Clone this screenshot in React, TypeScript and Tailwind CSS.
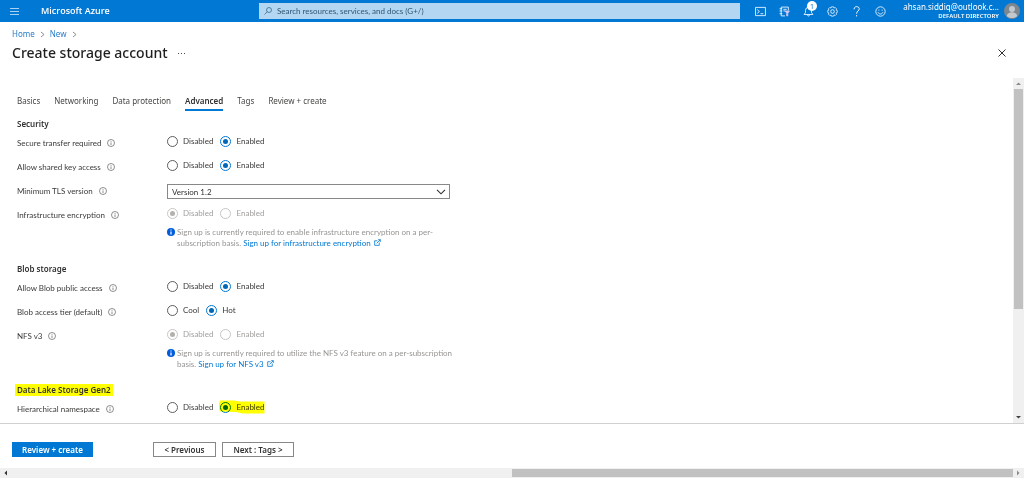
import { useState } from "react";
import type { ReactNode } from "react";

function InfoIcon() {
  return (
    <svg viewBox="0 0 16 16" className="size-2 shrink-0" fill="none" stroke="#605e5c" strokeWidth="1.4" aria-hidden="true">
      <circle cx="8" cy="8" r="7" />
      <path d="M8 7v5M8 4v1.6" />
    </svg>
  );
}

function ExternalIcon() {
  return (
    <svg viewBox="0 0 16 16" className="ml-[3px] inline size-[7px] align-baseline" fill="none" stroke="currentColor" strokeWidth="1.8" aria-hidden="true">
      <path d="M8 4H1.5v10.5H12V8M6 10 14.5 1.5M9.5 1.5h5v5" />
    </svg>
  );
}

function Chevron() {
  return (
    <svg viewBox="0 0 8 10" className="h-[7px] w-[5px]" fill="none" stroke="#797775" strokeWidth="1.3" aria-hidden="true">
      <path d="m1.5 1 5 4-5 4" />
    </svg>
  );
}

function Radio({ name, label, checked, disabled, onSelect }: {
  name: string;
  label: string;
  checked: boolean;
  disabled?: boolean;
  onSelect: () => void;
}) {
  return (
    <label className={`flex h-3 items-center gap-[5px] ${disabled ? "text-[#a19f9d]" : ""}`}>
      <input
        type="radio"
        name={name}
        checked={checked}
        disabled={disabled}
        onChange={onSelect}
        className="grid size-[11px] shrink-0 appearance-none place-content-center rounded-full border border-[#605e5c] checked:border-[#0078d4] checked:before:size-[5px] checked:before:rounded-full checked:before:bg-[#0067b8] disabled:border-[#c8c6c4] disabled:before:bg-[#b3b0ad]"
      />
      {label}
    </label>
  );
}

function RadioPair({ name, options, initial, disabled, highlight }: {
  name: string;
  options: string[];
  initial: string;
  disabled?: boolean;
  highlight?: boolean;
}) {
  const [value, setValue] = useState(initial);
  return (
    <div role="radiogroup" aria-label={name} className="flex gap-[7px]">
      {options.map((o) => (
        <div key={o} className="relative">
          <Radio name={name} label={o} checked={value === o} disabled={disabled} onSelect={() => setValue(o)} />
          {highlight && o === initial && (
            <svg viewBox="0 0 46 14" className="pointer-events-none absolute -left-px -top-px h-[14px] w-[46px] mix-blend-multiply" aria-hidden="true">
              <path d="M1 0.5H15L21 1.5H45.5V13.5H24L17 12 1 11.5 0 9V3Z" fill="#ffff00" />
            </svg>
          )}
        </div>
      ))}
    </div>
  );
}

function Row({ label, htmlFor, children }: { label: string; htmlFor?: string; children: ReactNode }) {
  return (
    <div className="grid min-h-5 grid-cols-[150px_minmax(0,283px)] items-start">
      <div className="flex items-center gap-1.5 pt-0.5">
        {htmlFor ? <label htmlFor={htmlFor}>{label}</label> : <span>{label}</span>}
        <InfoIcon />
      </div>
      <div>{children}</div>
    </div>
  );
}

function Section({ title, children }: { title: ReactNode; children: ReactNode }) {
  return (
    <section>
      <h2 className="mb-[5px] font-semibold text-[#323130]">{title}</h2>
      <div className="flex flex-col gap-1 font-['Lato','Noto_Sans',sans-serif] text-[#3b3a39]">{children}</div>
    </section>
  );
}

function Notice({ text, link }: { text: string; link: string }) {
  return (
    <div className="-mr-3 mt-2 flex gap-0.5 leading-[11px] text-[#979593]">
      <svg viewBox="0 0 16 16" className="mt-px size-2 shrink-0" aria-hidden="true">
        <circle cx="8" cy="8" r="8" fill="#015cda" />
        <path d="M8 6.8V13M8 3v2.2" stroke="#fff" strokeWidth="2.4" />
      </svg>
      <p>
        {text}{" "}
        <a href="#signup" className="whitespace-nowrap text-[#0078d4]">
          {link}
          <ExternalIcon />
        </a>
      </p>
    </div>
  );
}

function HeaderButton({ label, badge, children }: { label: string; badge?: string; children: ReactNode }) {
  return (
    <button type="button" aria-label={label} className="relative flex w-6 items-center justify-center">
      <svg viewBox="0 0 20 20" className="size-[11px]" fill="none" stroke="#fff" strokeWidth="1.5">
        {children}
      </svg>
      {badge && (
        <span className="absolute left-[11px] top-px flex size-[10px] items-center justify-center rounded-full bg-white text-[7px] leading-none text-[#0078d4]">
          {badge}
        </span>
      )}
    </button>
  );
}

function Header() {
  return (
    <header className="flex h-[22px] items-stretch bg-[#0078d4] text-white">
      <div className="flex w-[259px] shrink-0 items-center">
        <button type="button" aria-label="Menu" className="flex w-[29px] justify-center">
          <svg viewBox="0 0 9 7" className="h-[7px] w-[9px]" stroke="#a8d2f3" strokeWidth="1">
            <path d="M0 .5h9M0 3.5h9M0 6.5h9" />
          </svg>
        </button>
        <a href="#home" className="ml-3 font-['Open_Sans','Noto_Sans',sans-serif] text-[9px] font-semibold">Microsoft Azure</a>
      </div>
      <label className="my-[3px] flex min-w-0 flex-1 items-center bg-[#b3d7f2]">
        <svg viewBox="0 0 16 16" className="ml-[5px] size-2 shrink-0" fill="none" stroke="#33658c" strokeWidth="1.5" aria-hidden="true">
          <circle cx="10" cy="6" r="5" />
          <path d="M6.5 9.5 1 15" />
        </svg>
        <input
          type="text"
          aria-label="Search"
          placeholder="Search resources, services, and docs (G+/)"
          className="ml-[5px] min-w-0 flex-1 bg-transparent font-['Lato','Noto_Sans',sans-serif] leading-3 outline-none placeholder:text-[#2f5676]"
        />
      </label>
      <div className="ml-2 flex shrink-0">
        <HeaderButton label="Cloud Shell">
          <path d="M1 2.5h18v15H1zM4 6.5l4 3.5-4 3.5M10 14h5" />
        </HeaderButton>
        <HeaderButton label="Directories and subscriptions">
          <path d="M4 8V2h13v6M4 8v10h7M1 5h5M1 9h5M1 14h5M8 6h6M8 9h3" />
          <path d="M11 9h8l-3 4v5h-2v-5z" fill="#d9c4f2" stroke="#d9c4f2" />
        </HeaderButton>
        <HeaderButton label="Notifications" badge="1">
          <path d="M2 15.5h16l-2.5-3.5V8a5.5 5.5 0 0 0-11 0v4zM8 16c0 3 4 3 4 0" />
        </HeaderButton>
        <HeaderButton label="Settings">
          <path d="m8 1.500h4l.7 2.300 2.300-1.100 2.500 2.500-1.100 2.300 2.300.7v3.600l-2.300.7 1.100 2.300-2.500 2.500-2.300-1.100-.7 2.300H8l-.7-2.300L5 17.300l-2.500-2.500 1.100-2.300-2.300-.7V8.200l2.300-.7-1.100-2.300L5 2.700l2.300 1.100z" strokeWidth="1.3" />
          <circle cx="10" cy="10" r="3.3" />
        </HeaderButton>
        <HeaderButton label="Help">
          <path d="M5.500 6c0-6.500 9.500-6 9.500-1 0 4-4.800 4-4.800 9M10.200 16.500v2.500" strokeWidth="1.7" />
        </HeaderButton>
        <HeaderButton label="Feedback">
          <circle cx="10" cy="10" r="8.500" />
          <path d="M5.500 11.500c1.500 4 7.500 4 9 0M7 6.500v2M13 6.500v2" />
        </HeaderButton>
      </div>
      <button type="button" className="flex w-[132px] shrink-0 items-center justify-end gap-[5px] pr-1 text-right">
        <span>
          <span className="block leading-[10px]">ahsan.siddiq@outlook.c...</span>
          <span className="block text-[6px] font-semibold leading-[8px]">DEFAULT DIRECTORY</span>
        </span>
        <svg viewBox="0 0 16 16" className="size-4 shrink-0" aria-hidden="true">
          <circle cx="8" cy="8" r="8" fill="#7d8790" />
          <circle cx="8" cy="6" r="3" fill="#c3c8cc" />
          <path d="M2.800 13c.5-5 9.900-5 10.400 0-2.500 2.800-7.900 2.800-10.400 0Z" fill="#c3c8cc" />
        </svg>
      </button>
    </header>
  );
}

const TABS = ["Basics", "Networking", "Data protection", "Advanced", "Tags", "Review + create"];

export default function App() {
  return (
    <div className="flex min-h-screen flex-col bg-white font-['Noto_Sans','Open_Sans',sans-serif] text-[8px] leading-3 text-[#484644]">
      <Header />
      <div className="flex h-14 shrink-0 flex-col pl-3 pr-[18px] pt-1.5">
        <nav aria-label="Breadcrumb" className="flex items-center gap-[5px] text-[#2b7cc9]">
          <a href="#home">Home</a>
          <Chevron />
          <a href="#new">New</a>
          <Chevron />
        </nav>
        <div className="mt-[3px] flex items-center">
          <h1 className="text-[14px] font-medium leading-5 text-[#201f1e]">Create storage account</h1>
          <button type="button" aria-label="More" className="ml-[10px] flex gap-0.5">
            <span className="size-px bg-[#484644]" />
            <span className="size-px bg-[#484644]" />
            <span className="size-px bg-[#484644]" />
          </button>
          <button type="button" aria-label="Close" className="ml-auto">
            <svg viewBox="0 0 8 8" className="size-2" stroke="#323130" strokeWidth="1">
              <path d="m.5.5 7 7m0-7-7 7" />
            </svg>
          </button>
        </div>
      </div>

      <div className="flex flex-1 border-b border-[#d2d0ce]">
        <main className="min-w-0 flex-1 pb-px pl-[17px] pt-[17px]">
          <nav aria-label="Steps" className="flex gap-[14px]">
            {TABS.map((t) => (
              <a
                key={t}
                href="#step"
                className={`border-b-2 pb-0.5 ${t === "Advanced" ? "border-[#0078d4] font-semibold text-[#323130]" : "border-transparent"}`}
              >
                {t}
              </a>
            ))}
          </nav>

          <div className="mt-[7px] flex flex-col gap-[14px]">
            <Section title="Security">
              <Row label="Secure transfer required">
                <RadioPair name="Secure transfer required" options={["Disabled", "Enabled"]} initial="Enabled" />
              </Row>
              <Row label="Allow shared key access">
                <RadioPair name="Allow shared key access" options={["Disabled", "Enabled"]} initial="Enabled" />
              </Row>
              <Row label="Minimum TLS version" htmlFor="tls">
                <div className="relative mt-px">
                  <select id="tls" className="block h-[15px] w-full appearance-none border border-[#8a8886] bg-white px-1 leading-3 text-[#323130]">
                    <option>Version 1.2</option>
                  </select>
                  <svg viewBox="0 0 10 6" className="pointer-events-none absolute right-1 top-[5px] h-[6px] w-[10px]" fill="none" stroke="#323130" strokeWidth="1.1" aria-hidden="true">
                    <path d="m1 .8 4 4 4-4" />
                  </svg>
                </div>
              </Row>
              <Row label="Infrastructure encryption">
                <RadioPair name="Infrastructure encryption" options={["Disabled", "Enabled"]} initial="Disabled" disabled />
                <Notice
                  text="Sign up is currently required to enable infrastructure encryption on a per-subscription basis."
                  link="Sign up for infrastructure encryption"
                />
              </Row>
            </Section>

            <Section title="Blob storage">
              <Row label="Allow Blob public access">
                <RadioPair name="Allow Blob public access" options={["Disabled", "Enabled"]} initial="Enabled" />
              </Row>
              <Row label="Blob access tier (default)">
                <RadioPair name="Blob access tier" options={["Cool", "Hot"]} initial="Hot" />
              </Row>
              <Row label="NFS v3">
                <RadioPair name="NFS v3" options={["Disabled", "Enabled"]} initial="Disabled" disabled />
                <Notice
                  text="Sign up is currently required to utilize the NFS v3 feature on a per-subscription basis."
                  link="Sign up for NFS v3"
                />
              </Row>
            </Section>

            <Section title={<span className="-mx-0.5 inline-block bg-[#ffff00] px-0.5">Data Lake Storage Gen2</span>}>
              <Row label="Hierarchical namespace">
                <RadioPair name="Hierarchical namespace" options={["Disabled", "Enabled"]} initial="Enabled" highlight />
              </Row>
            </Section>
          </div>
        </main>

        <div className="flex w-[11px] shrink-0 flex-col items-center bg-[#f0f0f0]" aria-hidden="true">
          <svg viewBox="0 0 11 11" className="size-[11px] shrink-0">
            <path d="M3 7h5L5.500 4.500Z" fill="#8a8a8a" />
          </svg>
          <div className="flex w-[9px] flex-1 flex-col">
            <div className="flex-[68] bg-[#c1c1c1]" />
            <div className="flex-[32]" />
          </div>
          <svg viewBox="0 0 11 11" className="size-[11px] shrink-0">
            <path d="M3 4h5L5.500 6.500Z" fill="#404040" />
          </svg>
        </div>
      </div>

      <footer className="flex shrink-0 pb-[11px] pl-3 pt-[18px] font-semibold text-[#323130]">
        <button type="button" className="h-[15px] w-[81px] bg-[#0078d4] text-white">Review + create</button>
        <button type="button" className="ml-[60px] h-[15px] w-[63px] border border-[#8a8886] leading-none">&lt; Previous</button>
        <button type="button" className="ml-1.5 h-[15px] w-[72px] border border-[#8a8886] leading-none">Next : Tags &gt;</button>
      </footer>

      <div className="flex h-[10px] shrink-0 items-center bg-[#f0f0f0]" aria-hidden="true">
        <svg viewBox="0 0 11 10" className="h-[10px] w-[11px]">
          <path d="M7 2.500v5L4.500 5Z" fill="#303030" />
        </svg>
        <div className="flex h-2 flex-1">
          <div className="flex-1" />
          <div className="flex-1 bg-[#c1c1c1]" />
        </div>
        <svg viewBox="0 0 11 10" className="h-[10px] w-[11px]">
          <path d="M4 2.500v5L6.500 5Z" fill="#8a8a8a" />
        </svg>
      </div>
    </div>
  );
}
